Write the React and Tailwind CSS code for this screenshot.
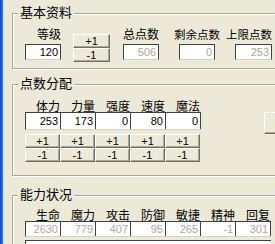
import React from 'react';

const cjk = "font-['Noto_Sans_CJK_SC','Noto_Sans_CJK_JP',sans-serif]";
const num = "font-['Liberation_Sans',Arial,sans-serif] text-[11px]";

function Group({ title, className, children }) {
  return (
    <div className={`relative border border-[#ACA899] shadow-[inset_1px_1px_0_#fff,1px_1px_0_#fff] ${className}`}>
      <span className={`absolute -top-[10px] left-[5px] px-[2px] bg-[#ECE9D8] text-[13px] leading-[16px] ${cjk}`}>
        {title}
      </span>
      {children}
    </div>
  );
}

function Btn({ label, className = '' }) {
  return (
    <button className={`flex items-center justify-center bg-[#ECE9D8] border border-t-white border-l-white border-b-[#716F64] border-r-[#716F64] shadow-[inset_-1px_-1px_0_#ACA899] leading-none ${num} ${className}`}>
      {label}
    </button>
  );
}

function Box({ value, disabled, className = '' }) {
  return (
    <div className={`flex items-center justify-end pr-[2px] bg-white border border-t-[#404040] border-l-[#404040] border-r-[#404040] border-b-[#D4D0C8] leading-none ${num} ${disabled ? 'text-[#ACA899]' : 'text-black'} ${className}`}>
      {value}
    </div>
  );
}

function Field({ label, value, disabled, align = 'center', w = 'w-[36px]', size = 'text-[12px]' }) {
  return (
    <div className={`flex flex-col ${align === 'right' ? 'items-end' : 'items-center'} ${w}`}>
      <span className={`${size} leading-[14px] whitespace-nowrap ${cjk}`}>{label}</span>
      <Box value={value} disabled={disabled} className={`mt-[3px] h-[16px] ${w}`} />
    </div>
  );
}

function StatRow({ labels, values, disabled, h }) {
  return (
    <div>
      <div className="flex">
        {labels.map(l => (
          <span key={l} className={`w-[35px] text-right text-[12px] leading-[12px] ${cjk}`}>{l}</span>
        ))}
      </div>
      <div className="flex border-t border-l border-[#404040] border-b border-b-[#D4D0C8] w-fit">
        {values.map((v, i) => (
          <div key={i} className={`w-[35px] ${h} flex items-center justify-end pr-[2px] bg-white border-r border-[#404040] leading-none ${num} ${disabled ? 'text-[#ACA899]' : 'text-black'}`}>
            {v}
          </div>
        ))}
      </div>
    </div>
  );
}

export default function App() {
  return (
    <div className="w-[275px] h-[244px] overflow-hidden bg-[#ECE9D8] flex text-black">
      <div className="w-[3px] shrink-0 bg-gradient-to-r from-[#0A3CD0] to-[#3F7DF0]" />
      <div className="flex-1 pl-[9px] pt-[13px] flex flex-col">
        <Group title="基本资料" className="w-[300px] h-[56px] shrink-0">
          <div className="flex items-start pl-[12px] pt-[13px]">
            <Field label="等级" value="120" align="right" />
            <div className="ml-[12px] mt-[7px] flex flex-col">
              <Btn label="+1" className="w-[37px] h-[14px]" />
              <Btn label="-1" className="w-[37px] h-[14px]" />
            </div>
            <div className="ml-[13px]"><Field label="总点数" value="506" disabled /></div>
            <div className="ml-[20px]"><Field label="剩余点数" value="0" disabled size="text-[11.5px]" /></div>
            <div className="ml-[20px]"><Field label="上限点数" value="253" disabled align="right" w="w-[37px]" size="text-[11.5px]" /></div>
          </div>
        </Group>

        <Group title="点数分配" className="w-[300px] h-[92px] shrink-0 mt-[15px]">
          <div className="flex items-start pl-[12px] pt-[15px]">
            <div>
              <StatRow labels={['体力', '力量', '强度', '速度', '魔法']} values={['253', '173', '0', '80', '0']} h="h-[16px]" />
              <div className="mt-[4px] grid grid-cols-5 w-[175px]">
                {[0, 1, 2, 3, 4].map(i => <Btn key={'p' + i} label="+1" className="h-[14px]" />)}
                {[0, 1, 2, 3, 4].map(i => <Btn key={'m' + i} label="-1" className="h-[14px]" />)}
              </div>
            </div>
            <Btn label="" className="ml-[63px] mt-[12px] w-[40px] h-[22px]" />
          </div>
        </Group>

        <Group title="能力状况" className="w-[300px] h-[80px] shrink-0 mt-[19px]">
          <div className="pl-[12px] pt-[13px]">
            <StatRow
              labels={['生命', '魔力', '攻击', '防御', '敏捷', '精神', '回复']}
              values={['2630', '779', '407', '95', '265', '-1', '301']}
              disabled
              h="h-[14px]"
            />
            <div className="mt-[3px] w-[246px] h-[14px] border-t border-l border-[#404040] bg-white" />
          </div>
        </Group>
      </div>
    </div>
  );
}
